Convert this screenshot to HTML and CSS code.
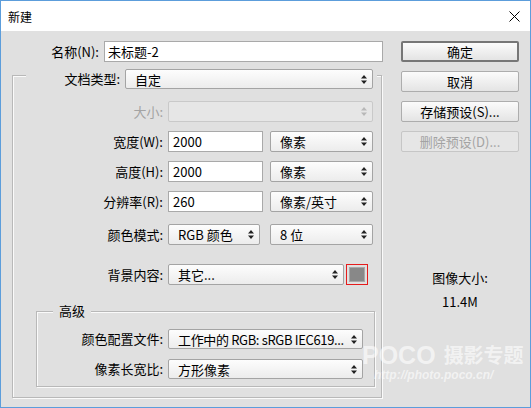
FILE: index.html
```html
<!DOCTYPE html>
<html>
    <head>
        <title>新建</title>
        <link rel="stylesheet" href="styles.css">
    </head>
    <body>
        <div class="dialog">
            <div class="titlebar">
                <span class="title">新建</span>
                <svg class="close" width="11" height="11" viewBox="0 0 11 11"><path d="M0.5 0.5L10.5 10.5M10.5 0.5L0.5 10.5" stroke="#000" stroke-width="1" fill="none"/></svg>
            </div>
            <div class="content">
                <div class="main">
                    <div class="row nameRow">
                        <div class="label">名称(N):</div>
                        <div class="field nameField">未标题-2</div>
                    </div>
                    <div class="group">
                        <div class="row typeRow">
                            <div class="label">文档类型:</div>
                            <div class="select typeSelect"><span>自定</span><svg class="updown" width="6" height="9" viewBox="0 0 6 9"><path d="M3 0L6 3.5H0Z M0 5.5H6L3 9Z" fill="#222"/></svg></div>
                        </div>
                        <div class="row formRow sizeRow">
                            <div class="label off">大小:</div>
                            <div class="select off wideSelect"><span></span><svg class="updown" width="6" height="9" viewBox="0 0 6 9"><path d="M3 0L6 3.5H0Z M0 5.5H6L3 9Z" fill="#b8b8b8"/></svg></div>
                        </div>
                        <div class="row formRow">
                            <div class="label">宽度(W):</div>
                            <div class="pair">
                                <div class="field numField">2000</div>
                                <div class="select unitSelect"><span>像素</span><svg class="updown" width="6" height="9" viewBox="0 0 6 9"><path d="M3 0L6 3.5H0Z M0 5.5H6L3 9Z" fill="#222"/></svg></div>
                            </div>
                        </div>
                        <div class="row formRow">
                            <div class="label">高度(H):</div>
                            <div class="pair">
                                <div class="field numField">2000</div>
                                <div class="select unitSelect"><span>像素</span><svg class="updown" width="6" height="9" viewBox="0 0 6 9"><path d="M3 0L6 3.5H0Z M0 5.5H6L3 9Z" fill="#222"/></svg></div>
                            </div>
                        </div>
                        <div class="row formRow">
                            <div class="label">分辨率(R):</div>
                            <div class="pair">
                                <div class="field numField">260</div>
                                <div class="select unitSelect"><span>像素/英寸</span><svg class="updown" width="6" height="9" viewBox="0 0 6 9"><path d="M3 0L6 3.5H0Z M0 5.5H6L3 9Z" fill="#222"/></svg></div>
                            </div>
                        </div>
                        <div class="row formRow modeRow">
                            <div class="label">颜色模式:</div>
                            <div class="pair">
                                <div class="select modeSelect"><span>RGB 颜色</span><svg class="updown" width="6" height="9" viewBox="0 0 6 9"><path d="M3 0L6 3.5H0Z M0 5.5H6L3 9Z" fill="#222"/></svg></div>
                                <div class="select unitSelect"><span>8 位</span><svg class="updown" width="6" height="9" viewBox="0 0 6 9"><path d="M3 0L6 3.5H0Z M0 5.5H6L3 9Z" fill="#222"/></svg></div>
                            </div>
                        </div>
                        <div class="row formRow bgRow">
                            <div class="label">背景内容:</div>
                            <div class="pair">
                                <div class="select bgSelect"><span>其它...</span><svg class="updown" width="6" height="9" viewBox="0 0 6 9"><path d="M3 0L6 3.5H0Z M0 5.5H6L3 9Z" fill="#222"/></svg></div>
                                <div class="swatch"><div class="swatchFill"></div></div>
                            </div>
                        </div>
                        <div class="subGroup">
                            <div class="legend">高级</div>
                            <div class="row subRow">
                                <div class="label">颜色配置文件:</div>
                                <div class="select profileSelect"><span class="tight">工作中的 RGB: sRGB IEC619...</span><svg class="updown" width="6" height="9" viewBox="0 0 6 9"><path d="M3 0L6 3.5H0Z M0 5.5H6L3 9Z" fill="#222"/></svg></div>
                            </div>
                            <div class="row subRow">
                                <div class="label">像素长宽比:</div>
                                <div class="select profileSelect"><span>方形像素</span><svg class="updown" width="6" height="9" viewBox="0 0 6 9"><path d="M3 0L6 3.5H0Z M0 5.5H6L3 9Z" fill="#222"/></svg></div>
                            </div>
                        </div>
                    </div>
                </div>
                <div class="side">
                    <div class="btn default">确定</div>
                    <div class="btn">取消</div>
                    <div class="btn">存储预设(S)...</div>
                    <div class="btn off">删除预设(D)...</div>
                    <div class="imageSize">图像大小:</div>
                    <div class="imageValue">11.4M</div>
                </div>
            </div>
            <div class="watermark">
                <div class="wmBrand"><span class="wmPoco">POCO</span> 摄影专题</div>
                <div class="wmUrl">http://photo.poco.cn/</div>
            </div>
        </div>
    </body>
</html>
```
FILE: styles.css
```css
html,body{
    margin:0;
    padding:0;
}
body{
    font-family:"Noto Sans CJK SC","Liberation Sans",sans-serif;
    font-size:13px;
    color:#000;
}
.dialog{
    position:relative;
    width:531px;
    height:408px;
    box-sizing:border-box;
    border:1px solid #5c9ddb;
    background:#e0e0e0;
    display:flex;
    flex-direction:column;
    overflow:hidden;
}
.titlebar{
    height:30px;
    background:#fff;
    display:flex;
    align-items:center;
    justify-content:space-between;
    padding:0 10px 0 7px;
}
.title{
    font-size:12px;
}
.content{
    display:flex;
    padding-top:10px;
}
.main{
    width:382px;
}
.row{
    display:flex;
    align-items:center;
}
.label{
    text-align:right;
    padding-right:5px;
    box-sizing:border-box;
    white-space:nowrap;
    line-height:20px;
}
.label.off{
    color:#a3a3a3;
}
.nameRow .label{
    width:103px;
}
.field{
    height:21px;
    box-sizing:border-box;
    background:#fff;
    border:1px solid #a9a9a9;
    line-height:19px;
    padding:0 4px;
    white-space:nowrap;
}
.nameField{
    width:279px;
    padding-left:3px;
}
.select{
    height:20px;
    box-sizing:border-box;
    border:1px solid #a4a4a4;
    border-radius:2px;
    background:linear-gradient(#fdfdfd,#ececec);
    display:flex;
    align-items:center;
    justify-content:space-between;
    padding:0 5px 0 9px;
    white-space:nowrap;
    overflow:hidden;
}
.select span{
    overflow:hidden;
    min-width:0;
}
.select .tight{
    letter-spacing:-0.35px;
}
.select.off{
    border-color:#c9c9c9;
    background:#e6e6e6;
}
.updown{
    flex:none;
    margin-left:3px;
}
.group{
    margin:13px 0 0 11px;
    width:370px;
    box-sizing:border-box;
    border:1px solid #b8b8b8;
    box-shadow:inset 1px 1px 0 #fafafa,1px 1px 0 #fafafa;
    padding-bottom:10px;
}
.typeRow{
    margin:-7px 0 0 13px;
    width:351px;
    background:#e0e0e0;
}
.typeRow .label{
    width:99px;
}
.typeSelect{
    width:248px;
    padding-left:9px;
}
.formRow{
    margin-top:9px;
}
.formRow .label{
    width:155px;
}
.sizeRow{
    margin-top:12px;
}
.modeRow{
    margin-top:12px;
}
.bgRow{
    margin-top:19px;
}
.pair{
    display:flex;
    align-items:center;
}
.numField{
    width:95px;
    margin-right:7px;
}
.formRow .field,.formRow .select{
    height:21px;
}
.wideSelect{
    width:205px;
}
.unitSelect{
    width:103px;
}
.modeSelect{
    width:92px;
    margin-right:10px;
}
.bgSelect{
    width:176px;
    margin-right:2px;
}
.swatch{
    width:22px;
    height:21px;
    box-sizing:border-box;
    border:1px solid #e51c1c;
    padding:2px;
}
.swatchFill{
    height:100%;
    box-sizing:border-box;
    background:#888;
    border:1px solid #a9a9a9;
}
.subGroup{
    margin:26px 0 0 23px;
    width:339px;
    box-sizing:border-box;
    border:1px solid #b8b8b8;
    box-shadow:inset 1px 1px 0 #fafafa,1px 1px 0 #fafafa;
    padding-bottom:7px;
}
.legend{
    width:fit-content;
    margin:-9px 0 0 16px;
    padding:0 6px;
    background:#e0e0e0;
    line-height:16px;
}
.subRow{
    margin-top:10px;
}
.subRow:first-of-type{
    margin-top:8px;
}
.subRow .label{
    width:131px;
}
.profileSelect{
    width:195px;
}
.side{
    margin-left:18px;
    width:118px;
    display:flex;
    flex-direction:column;
}
.btn{
    height:21px;
    box-sizing:border-box;
    border:1px solid #adadad;
    border-radius:2px;
    background:linear-gradient(#fbfbfb,#e4e4e4);
    text-align:center;
    line-height:19px;
    margin-bottom:9px;
    white-space:nowrap;
}
.btn.default{
    border:2px solid #767676;
    line-height:17px;
}
.btn.off{
    color:#a3a3a3;
    border-color:#c6c6c6;
    background:#e6e6e6;
}
.imageSize{
    margin-top:109px;
    text-align:center;
    line-height:16px;
}
.imageValue{
    margin-top:8px;
    text-align:center;
    line-height:16px;
}
.watermark{
    position:absolute;
    left:361px;
    top:341px;
    color:rgba(255,255,255,0.6);
    font-weight:bold;
}
.wmBrand{
    display:flex;
    align-items:center;
    gap:8px;
    height:25px;
    font-size:20px;
    line-height:24px;
    white-space:nowrap;
}
.wmPoco{
    font-family:"Liberation Sans",sans-serif;
    font-size:25px;
    line-height:24px;
}
.wmUrl{
    font-family:"Liberation Sans",sans-serif;
    font-size:12px;
    font-style:italic;
    margin:2px 0 0 12px;
    line-height:12px;
}
```
